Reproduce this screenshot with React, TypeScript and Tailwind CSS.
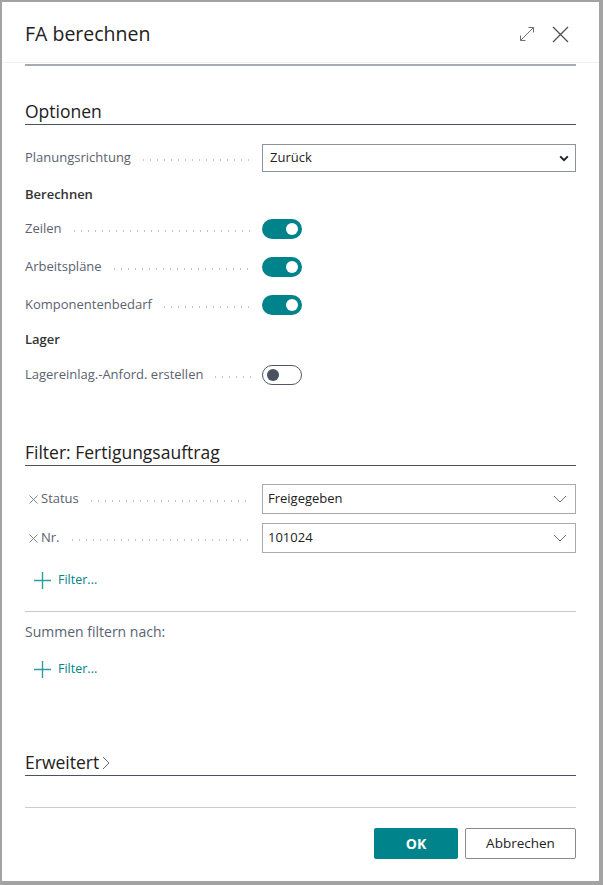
import { useState } from 'react';

const font = { fontFamily: '"Segoe UI", "Open Sans", sans-serif' };

function Dots() {
  return (
    <div className="flex-1 h-[2px] mt-[4px] ml-[9px] bg-[radial-gradient(circle,#c2c5ca_0.9px,transparent_1.1px)] bg-[length:7px_2px] bg-repeat-x" />
  );
}

function Toggle({ on }: { on: boolean }) {
  if (on) {
    return (
      <div className="w-[40px] h-[20px] rounded-full bg-[#00838a] flex items-center justify-end pr-[4px]">
        <div className="w-[12px] h-[12px] rounded-full bg-white" />
      </div>
    );
  }
  return (
    <div className="w-[40px] h-[20px] rounded-full border border-[#505a66] flex items-center pl-[4px]">
      <div className="w-[12px] h-[12px] rounded-full bg-[#4a5260]" />
    </div>
  );
}

function Row({ label, children, clear = false, h = 'h-[22px]' }: { label: string; children: React.ReactNode; clear?: boolean; h?: string }) {
  return (
    <div className={`flex items-center ${h}`}>
      <div className="w-[227px] flex items-center text-[13px] text-[#5a6270]">
        {clear && (
          <svg width="9" height="9" viewBox="0 0 9 9" fill="none" className="ml-[4px] mr-[3px]">
            <path d="M0.5 0.5l8 8M8.5 0.5l-8 8" stroke="#80858c" strokeWidth="1" />
          </svg>
        )}
        <span>{label}</span>
        <Dots />
      </div>
      <div className="ml-[10px] flex-1 h-full flex items-center">{children}</div>
    </div>
  );
}

function ThinChevron() {
  return (
    <svg width="14" height="8" viewBox="0 0 14 8" fill="none">
      <path d="M1 1l6 6 6-6" stroke="#6b7280" strokeWidth="1" />
    </svg>
  );
}

function FilterField({ value }: { value: string }) {
  return (
    <div className="w-full h-full border border-[#a8abb0] flex items-center justify-between pl-[5px] pr-[8px] text-[13px] text-[#222]">
      <span>{value}</span>
      <ThinChevron />
    </div>
  );
}

function AddFilter() {
  return (
    <div className="flex items-center h-[22px] pl-[9px] text-[12.5px] text-[#00838a]">
      <svg width="17" height="17" viewBox="0 0 17 17" className="mr-[7px]">
        <path d="M8.5 0v17M0 8.5h17" stroke="#2b9ea1" strokeWidth="1.4" />
      </svg>
      Filter...
    </div>
  );
}

export default function App() {
  const [dir] = useState('Zurück');

  return (
    <div className="w-[603px] h-[885px] bg-[#a3a3a3] pl-[2px] pt-[2px]" style={font}>
      <div className="w-[597px] h-[879px] bg-white flex flex-col">
        {/* header */}
        <div className="h-[60px] flex items-center justify-between pl-[23px] pr-[30px] shadow-[0_1px_0_#f0f0f0]">
          <h1 className="text-[19.5px] text-[#212121] pt-[4px]">FA berechnen</h1>
          <div className="flex items-center gap-[17px] pt-[4px]">
            <svg width="16" height="16" viewBox="0 0 16 16" fill="none" stroke="#707070" strokeWidth="1">
              <path d="M1.5 14.5L14.5 1.5M9.5 1.5h5v5M1.5 9.5v5h5" />
            </svg>
            <svg width="17" height="17" viewBox="0 0 17 17" fill="none" stroke="#505050" strokeWidth="1.3">
              <path d="M1 1l15 15M16 1L1 16" />
            </svg>
          </div>
        </div>
        <div className="mt-[2px] mx-[23px] h-[2px] bg-[#a6abb4]" />

        <div className="px-[23px] flex flex-col">
          {/* Optionen */}
          <div className="mt-[32px] text-[17.5px] leading-[26px] text-[#212121] border-b border-[#4a5160]">Optionen</div>

          <div className="mt-[19px]">
            <Row label="Planungsrichtung" h="h-[28px]">
              <div className="w-full h-full border border-[#8d939c] flex items-center justify-between pl-[7px] pr-[6px] text-[13px] text-[#222]">
                <span>{dir}</span>
                <svg width="10" height="7" viewBox="0 0 10 7" fill="none">
                  <path d="M1.2 1.4L5 5.2l3.8-3.8" stroke="#222" strokeWidth="2" />
                </svg>
              </div>
            </Row>
          </div>

          <div className="h-[46px] flex items-center text-[13px] font-semibold text-[#333]">Berechnen</div>
          <div className="flex flex-col gap-[16px]">
            <Row label="Zeilen"><Toggle on /></Row>
            <Row label="Arbeitspläne"><Toggle on /></Row>
            <Row label="Komponentenbedarf"><Toggle on /></Row>
          </div>
          <div className="h-[48px] flex items-center text-[13px] font-semibold text-[#333]">Lager</div>
          <Row label="Lagereinlag.-Anford. erstellen"><Toggle on={false} /></Row>

          {/* Filter */}
          <div className="mt-[53px] text-[17.5px] leading-[26px] text-[#212121] border-b border-[#4a5160]">Filter: Fertigungsauftrag</div>
          <div className="mt-[18px] flex flex-col gap-[9px]">
            <Row label="Status" clear h="h-[30px]"><FilterField value="Freigegeben" /></Row>
            <Row label="Nr." clear h="h-[30px]"><FilterField value="101024" /></Row>
          </div>
          <div className="mt-[16px]"><AddFilter /></div>

          <div className="mt-[20px] h-px bg-[#c4c7cc]" />
          <div className="mt-[9px] h-[20px] flex items-center text-[14px] text-[#5a6270]">Summen filtern nach:</div>
          <div className="mt-[17px]"><AddFilter /></div>

          {/* Erweitert */}
          <div className="mt-[69px] flex items-center text-[17.5px] leading-[26px] text-[#212121] border-b border-[#4a5160]">
            Erweitert
            <svg width="8" height="14" viewBox="0 0 8 14" fill="none" className="ml-[3px] mt-[2px]">
              <path d="M1 1l6 6-6 6" stroke="#6b6b6b" strokeWidth="1" />
            </svg>
          </div>

          <div className="mt-[31px] h-px bg-[#c9ccd0]" />
          <div className="mt-[20px] flex justify-end gap-[7px]">
            <button className="w-[84px] h-[31px] bg-[#00838a] rounded-[2px] text-white text-[14px] font-bold">OK</button>
            <button className="w-[111px] h-[31px] bg-white border border-[#8a8a8a] rounded-[2px] text-[#222] text-[13.5px] font-medium">Abbrechen</button>
          </div>
        </div>
      </div>
    </div>
  );
}
